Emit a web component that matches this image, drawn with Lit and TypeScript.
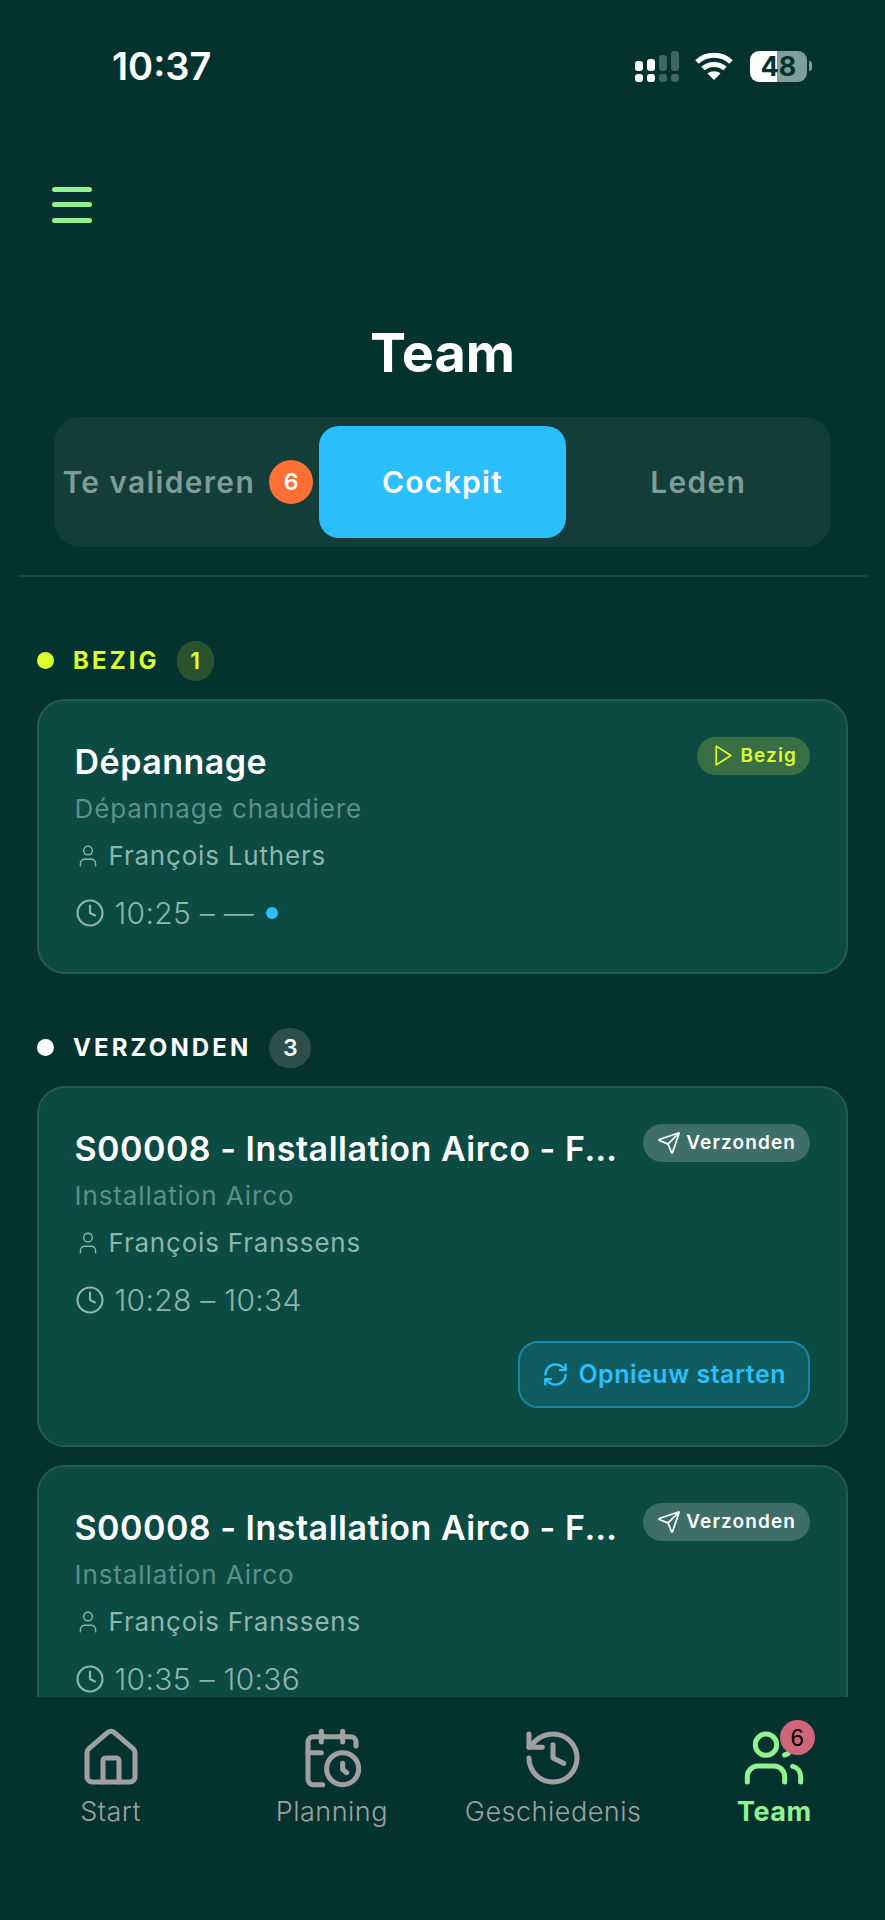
import { LitElement, html, css, svg } from 'lit';
import { customElement } from 'lit/decorators.js';

type Job = {
  title: string;
  sub: string;
  person: string;
  time: string;
  live?: boolean;
  retry?: boolean;
};

const icon = (size: number, stroke: number, body: unknown) => html`<svg
  class="icon"
  width=${size}
  height=${size}
  viewBox="0 0 24 24"
  fill="none"
  stroke="currentColor"
  stroke-width=${stroke}
  stroke-linecap="round"
  stroke-linejoin="round"
>
  ${body}
</svg>`;

const paths = {
  play: svg`<polygon points="6 3 20 12 6 21 6 3" />`,
  send: svg`<path d="M14.536 21.686a.5.5 0 0 0 .937-.024l6.5-19a.496.496 0 0 0-.635-.635l-19 6.5a.5.5 0 0 0-.024.937l7.93 3.18a2 2 0 0 1 1.112 1.11z" /><path d="m21.854 2.147-10.94 10.939" />`,
  refresh: svg`<path d="M3 12a9 9 0 0 1 9-9 9.75 9.75 0 0 1 6.74 2.74L21 8" /><path d="M21 3v5h-5" /><path d="M21 12a9 9 0 0 1-9 9 9.75 9.75 0 0 1-6.74-2.74L3 16" /><path d="M8 16H3v5" />`,
  clock: svg`<circle cx="12" cy="12" r="10" /><polyline points="12 6 12 12 16 14" />`,
  user: svg`<path d="M19 21v-2a4 4 0 0 0-4-4H9a4 4 0 0 0-4 4v2" /><circle cx="12" cy="7" r="4" />`,
  home: svg`<path d="M15 21v-8a1 1 0 0 0-1-1h-4a1 1 0 0 0-1 1v8" /><path d="M3 10a2 2 0 0 1 .709-1.528l7-5.999a2 2 0 0 1 2.582 0l7 5.999A2 2 0 0 1 21 10v9a2 2 0 0 1-2 2H5a2 2 0 0 1-2-2z" />`,
  calendar: svg`<path d="M21 7.5V6a2 2 0 0 0-2-2H5a2 2 0 0 0-2 2v14a2 2 0 0 0 2 2h3.5" /><path d="M16 2v4" /><path d="M8 2v4" /><path d="M3 10h5" /><path d="M17.5 17.5 16 16.3V14" /><circle cx="16" cy="16" r="6" />`,
  history: svg`<path d="M3 12a9 9 0 1 0 9-9 9.75 9.75 0 0 0-6.74 2.74L3 8" /><path d="M3 3v5h5" /><path d="M12 7v5l4 2" />`,
  users: svg`<path d="M16 21v-2a4 4 0 0 0-4-4H6a4 4 0 0 0-4 4v2" /><path d="M16 3.128a4 4 0 0 1 0 7.744" /><path d="M22 21v-2a4 4 0 0 0-3-3.87" /><circle cx="9" cy="7" r="4" />`,
};

const busy: Job[] = [
  { title: 'Dépannage', sub: 'Dépannage chaudiere', person: 'François Luthers', time: '10:25 – —', live: true },
];

const sent: Job[] = [
  {
    title: 'S00008 - Installation Airco - François Franssens',
    sub: 'Installation Airco',
    person: 'François Franssens',
    time: '10:28 – 10:34',
    retry: true,
  },
  {
    title: 'S00008 - Installation Airco - François Franssens',
    sub: 'Installation Airco',
    person: 'François Franssens',
    time: '10:35 – 10:36',
    retry: true,
  },
];

@customElement('app-root')
export class AppRoot extends LitElement {
  renderCard(job: Job, kind: 'busy' | 'sent') {
    return html`
      <article class="card">
        <div class="card-top">
          <h3>${job.title}</h3>
          <span class="pill ${kind}">
            ${kind === 'busy' ? icon(25, 1.6, paths.play) : icon(24, 1.7, paths.send)}
            ${kind === 'busy' ? 'Bezig' : 'Verzonden'}
          </span>
        </div>
        <p class="sub">${job.sub}</p>
        <p class="person">${icon(26, 1.3, paths.user)}<span>${job.person}</span></p>
        <p class="time">
          ${icon(30, 1.7, paths.clock)}<span>${job.time}</span>
          ${job.live ? html`<i class="live"></i>` : ''}
        </p>
        ${job.retry
          ? html`<div class="actions">
              <button class="retry">${icon(27, 2, paths.refresh)}Opnieuw starten</button>
            </div>`
          : ''}
      </article>
    `;
  }

  render() {
    return html`
      <div class="phone">
        <div class="status">
          <span class="clock">10:37</span>
          <div class="status-icons">
            <svg width="44" height="31" viewBox="0 0 44 31" fill="#fff">
              <rect x="0" y="10" width="8" height="10" rx="3" />
              <rect x="12" y="8" width="8" height="12" rx="3" />
              <rect x="24" y="4" width="8" height="16" rx="3" fill="#3f6662" />
              <rect x="36" y="0" width="8" height="20" rx="3" fill="#3f6662" />
              <rect x="0" y="23" width="8" height="8" rx="3" />
              <rect x="12" y="23" width="8" height="8" rx="3" />
              <rect x="24" y="23" width="8" height="8" rx="3" fill="#3f6662" />
              <rect x="36" y="23" width="8" height="8" rx="3" fill="#3f6662" />
            </svg>
            <svg class="wifi" width="38" height="28" viewBox="0 0 38 28" fill="none" stroke="#fff" stroke-width="5">
              <path d="M2 10 C11 1 27 1 36 10" />
              <path d="M8 16.5 C14 11 24 11 30 16.5" />
              <path d="M19 28 L12.500 21.500 C16 18.500 22 18.500 25.500 21.500 Z" fill="#fff" stroke="none" />
            </svg>
            <div class="battery"><span>48</span></div>
            <i class="battery-cap"></i>
          </div>
        </div>

        <button class="burger" aria-label="Menu"><i></i><i></i><i></i></button>

        <h1>Team</h1>

        <div class="tabs">
          <div class="tab">Te valideren <span class="count">6</span></div>
          <div class="tab active">Cockpit</div>
          <div class="tab">Leden</div>
        </div>
        <div class="divider"></div>

        <main>
          <div class="section-head busy-head">
            <i class="dot"></i><span>BEZIG</span><b>1</b>
          </div>
          ${busy.map(job => this.renderCard(job, 'busy'))}

          <div class="section-head sent-head">
            <i class="dot"></i><span>VERZONDEN</span><b>3</b>
          </div>
          ${sent.map(job => this.renderCard(job, 'sent'))}
        </main>

        <nav>
          <div class="nav-item">${icon(64, 1.9, paths.home)}<span>Start</span></div>
          <div class="nav-item">${icon(64, 1.9, paths.calendar)}<span>Planning</span></div>
          <div class="nav-item">${icon(64, 1.9, paths.history)}<span>Geschiedenis</span></div>
          <div class="nav-item current">
            ${icon(64, 1.9, paths.users)}<span>Team</span><em>6</em>
          </div>
        </nav>
      </div>
    `;
  }

  static styles = css`
    :host {
      display: block;
      font-family: Inter, 'Liberation Sans', sans-serif;
    }

    * {
      box-sizing: border-box;
    }

    .phone {
      width: 885px;
      height: 1920px;
      background: #04322f;
      display: flex;
      flex-direction: column;
      overflow: hidden;
    }

    .icon {
      display: block;
      flex: none;
    }

    .status {
      display: flex;
      justify-content: space-between;
      align-items: flex-start;
      height: 50px;
      margin-top: 44px;
      padding: 0 73px 0 112px;
      flex: none;
    }

    .clock {
      color: #fff;
      font-size: 38px;
      font-weight: 600;
      line-height: 44px;
    }

    .status-icons {
      display: flex;
      align-items: center;
      height: 44px;
    }

    .wifi {
      margin-left: 16px;
    }

    .battery {
      margin-left: 17px;
      width: 57px;
      height: 31px;
      border-radius: 9px;
      background: linear-gradient(90deg, #fff 0 47.500%, #7f9f9b 47.500% 100%);
      color: #04322f;
      font-size: 27px;
      font-weight: 700;
      line-height: 31px;
      text-align: center;
    }

    .battery-cap {
      width: 3px;
      height: 10px;
      margin-left: 2px;
      border-radius: 0 3px 3px 0;
      background: #7f9f9b;
    }

    .burger {
      flex: none;
      display: flex;
      flex-direction: column;
      gap: 10.700px;
      width: 40px;
      margin: 92.500px 0 0 52px;
      padding: 0;
      border: 0;
      background: none;
    }

    .burger i {
      height: 5px;
      border-radius: 2.500px;
      background: #92f28f;
    }

    h1 {
      flex: none;
      margin: 98px 0 0;
      color: #fff;
      font-size: 54px;
      font-weight: 700;
      line-height: 63px;
      text-align: center;
    }

    .tabs {
      flex: none;
      display: grid;
      grid-template-columns: repeat(3, minmax(0, 1fr));
      gap: 8px;
      height: 130px;
      margin: 33px 54px 0;
      padding: 9px;
      border-radius: 26px;
      background: #123d39;
    }

    .tab {
      display: flex;
      align-items: center;
      justify-content: center;
      gap: 14px;
      border-radius: 20px;
      color: #7f9c97;
      font-size: 30px;
      font-weight: 600;
      letter-spacing: 1.300px;
      white-space: nowrap;
    }

    .tab:first-child {
      padding-left: 2px;
    }

    .tab.active {
      background: #2bbffe;
      color: #fff;
    }

    .count {
      display: flex;
      align-items: center;
      justify-content: center;
      flex: none;
      width: 44px;
      height: 44px;
      border-radius: 50%;
      background: #ff7036;
      color: #fff;
      font-size: 23px;
      letter-spacing: 0;
    }

    .divider {
      flex: none;
      height: 2px;
      margin: 28px 18px 0;
      background: #1b4643;
    }

    main {
      flex: 1;
      min-height: 0;
      overflow: hidden;
      padding: 64px 37px 0;
    }

    .section-head {
      display: flex;
      align-items: center;
      height: 40px;
      margin-bottom: 18px;
      font-size: 24px;
      font-weight: 700;
      letter-spacing: 3.100px;
    }

    .section-head .dot {
      width: 17px;
      height: 17px;
      border-radius: 50%;
      background: currentColor;
      margin-right: 19px;
    }

    .section-head b {
      display: flex;
      align-items: center;
      justify-content: center;
      min-width: 37px;
      height: 40px;
      margin-left: 18px;
      border-radius: 20px;
      font-size: 23px;
      font-weight: 600;
      letter-spacing: 0;
    }

    .busy-head {
      color: #dcff2e;
    }

    .busy-head b {
      margin-left: 17px;
      background: #2a532d;
    }

    .sent-head {
      margin-top: 54px;
      color: #fff;
    }

    .sent-head b {
      min-width: 42px;
      background: #2d4f4c;
    }

    .card {
      margin-bottom: 18px;
      padding: 40px 36px 36px 35.500px;
      border: 2px solid #255a56;
      border-radius: 28px;
      background: #0c4a44;
    }

    .card-top {
      display: flex;
      align-items: flex-start;
      justify-content: space-between;
      gap: 26px;
    }

    h3 {
      flex: 1;
      min-width: 0;
      margin: 0;
      overflow: hidden;
      color: #fff;
      font-size: 34px;
      font-weight: 600;
      line-height: 42px;
      letter-spacing: 0.5px;
      text-overflow: ellipsis;
      white-space: nowrap;
    }

    .pill {
      flex: none;
      display: flex;
      align-items: center;
      gap: 5px;
      height: 38px;
      margin-top: -4px;
      padding: 0 14px;
      border-radius: 19px;
      font-size: 19px;
      font-weight: 600;
      letter-spacing: 1.100px;
    }

    .pill.busy {
      padding: 0 13px 0 13px;
      background: #3a6f44;
      color: #dcff2e;
    }

    .pill.sent {
      background: #3f6d67;
      color: #fff;
    }

    p {
      margin: 0;
    }

    .sub {
      margin-top: 8px;
      color: #5f8f88;
      font-size: 26px;
      font-weight: 400;
      line-height: 36px;
      letter-spacing: 0.900px;
    }

    .person {
      display: flex;
      align-items: center;
      gap: 8px;
      margin-top: 11px;
      color: #8fb5ae;
      font-size: 26px;
      line-height: 36px;
      letter-spacing: 0.800px;
    }

    .time {
      display: flex;
      align-items: center;
      gap: 10px;
      margin-top: 19px;
      margin-bottom: 3px;
      color: #8fb5ae;
      font-size: 30px;
      font-weight: 300;
      line-height: 40px;
      letter-spacing: 0.300px;
    }

    .live {
      width: 12px;
      height: 12px;
      margin-left: 2px;
      border-radius: 50%;
      background: #2bbffe;
    }

    .actions {
      display: flex;
      justify-content: flex-end;
      margin-top: 21px;
      margin-bottom: 1px;
    }

    .retry {
      display: flex;
      align-items: center;
      gap: 9px;
      height: 67px;
      padding: 0 22px;
      border: 2px solid #1a86a3;
      border-radius: 20px;
      background: #0f5c60;
      color: #2bbffe;
      font: 600 25px Inter, 'Liberation Sans', sans-serif;
      letter-spacing: 0.500px;
    }

    nav {
      position: relative;
      flex: none;
      display: grid;
      grid-template-columns: repeat(4, 1fr);
      height: 223px;
      padding-top: 29px;
      background: #04322f;
    }

    .nav-item {
      position: relative;
      display: flex;
      flex-direction: column;
      align-items: center;
      color: #a0a0a0;
      font-size: 27px;
      font-weight: 300;
      line-height: 32px;
      letter-spacing: 0.500px;
    }

    .nav-item span {
      margin-top: 6px;
    }

    .nav-item.current {
      color: #92f28f;
      font-weight: 700;
    }

    .nav-item em {
      position: absolute;
      top: -6px;
      left: 116px;
      display: flex;
      align-items: center;
      justify-content: center;
      width: 35px;
      height: 35px;
      border-radius: 50%;
      background: #d0657a;
      color: #000;
      font: 400 24px 'Liberation Sans', sans-serif;
      letter-spacing: 0;
    }
  `;
}

declare global {
  interface HTMLElementTagNameMap {
    'app-root': AppRoot;
  }
}
